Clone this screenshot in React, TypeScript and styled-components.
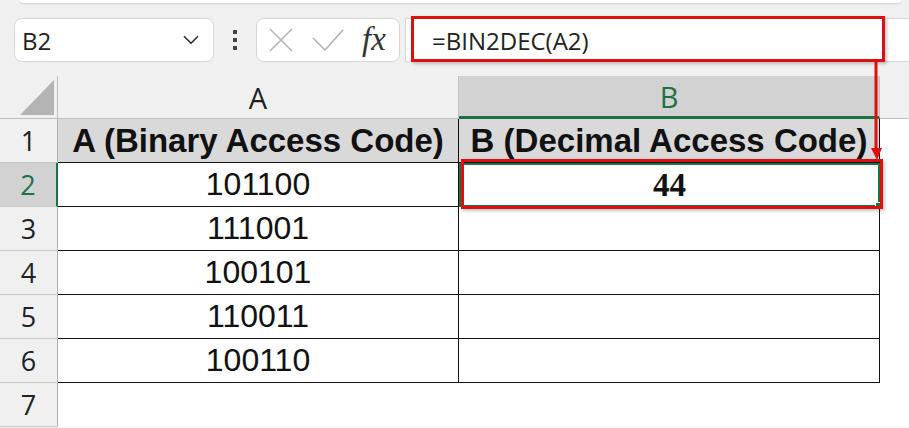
import styled, { createGlobalStyle } from 'styled-components';
import { ChevronDown } from 'lucide-react';

const GlobalStyle = createGlobalStyle`
  html, body { margin:0; padding:0; background:#f0f0f0; }
  * { box-sizing:border-box; }
`;

const GREEN = '#1e7145';
const RED = '#e00f0f';

const Page = styled.div`position:relative; width:909px; height:428px; overflow:hidden; background:#f0f0f0; font-family:"Open Sans","Noto Sans",sans-serif; color:#222;`;
const Ribbon = styled.div`height:3px; margin:0 8px 0 20px; background:#fff; border-radius:0 0 6px 6px; box-shadow:0 1px 2px rgba(0,0,0,.14);`;
const Toolbar = styled.div`display:flex; align-items:center; height:44px; margin-top:15px; padding-left:14px;`;
const NameBox = styled.div`
  width:200px; height:44px; display:flex; align-items:center; justify-content:space-between;
  padding:0 9px 0 7px; background:#fff; border:1px solid #d6d6d6; border-radius:8px; font-size:24px; color:#222;
`;
const Grip = styled.div`width:42px; display:flex; flex-direction:column; align-items:center; gap:4px; span{width:4px; height:4px; background:#444;}`;
const FxBox = styled.div`
  width:144px; height:44px; display:flex; align-items:center; gap:18px; padding:0 10px 0 11px;
  background:#fff; border:1px solid #d6d6d6; border-radius:8px;
`;
const Fx = styled.span`font-family:"Liberation Serif","Times New Roman",serif; font-style:italic; font-size:33px; color:#333; line-height:1; margin-top:-2px;`;
const FormulaBar = styled.div`
  position:relative; flex:1; height:44px; margin-left:5px; display:flex; align-items:center; padding-left:26px;
  background:#fff; border:1px solid #d9d9d9; border-right:none; font-size:24px; color:#222;
`;
const RedBox = styled.div`
  position:absolute; z-index:3; border:3px solid ${RED}; box-shadow:2px 2px 3px rgba(0,0,0,.22); pointer-events:none;
`;
const FormulaBox = styled(RedBox)`left:5px; top:-3px; width:474px; height:46px;`;
const CellBox = styled(RedBox)`left:0; top:-6px; right:-5px; bottom:-4px;`;
const Arrow = styled.svg`position:absolute; z-index:4; left:868px; top:60px;`;

const Sheet = styled.div`
  display:grid; margin-top:14px; grid-template-columns:58px 401px 421px 1fr;
  grid-template-rows:43px repeat(7, 44px); background:#fff;
`;
const Corner = styled.div`
  background:#f0f0f0; border-right:1px solid #bdbdbd; border-bottom:1px solid #bdbdbd; padding:4px 3px 3px 20px;
  div{width:100%; height:100%; background:#b4b4b4; clip-path:polygon(100% 0,100% 100%,0 100%);}
`;
const ColHeader = styled.div<{ $active?: boolean; $last?: boolean }>`
  display:flex; align-items:center; justify-content:center; font-size:29px;
  background:${({ $active }) => ($active ? '#d2d2d2' : '#f0f0f0')};
  color:${({ $active }) => ($active ? GREEN : '#222')};
  border-right:1px solid ${({ $last }) => ($last ? 'transparent' : '#c4c4c4')};
  border-bottom:${({ $active }) => ($active ? `3px solid ${GREEN}` : '1px solid #bdbdbd')};
`;
const RowHeader = styled.div<{ $active?: boolean }>`
  display:flex; align-items:center; justify-content:center; font-size:27px;
  background:${({ $active }) => ($active ? '#d2d2d2' : '#f0f0f0')};
  color:${({ $active }) => ($active ? GREEN : '#222')};
  border-bottom:1px solid #c8c8c8;
  border-right:${({ $active }) => ($active ? `2px solid ${GREEN}` : '1px solid #b0b0b0')};
`;
const Cell = styled.div<{ $head?: boolean; $table?: boolean }>`
  position:relative; display:flex; align-items:center; justify-content:center;
  font-family:"Liberation Sans",Arial,sans-serif; color:#111;
  font-weight:${({ $head }) => ($head ? 700 : 400)};
  font-size:${({ $head }) => ($head ? '33px' : '32px')};
  background:${({ $head }) => ($head ? '#d9d9d9' : '#fff')};
  border-right:1px solid ${({ $table }) => ($table ? '#111' : 'transparent')};
  border-bottom:1px solid ${({ $table }) => ($table ? '#111' : 'transparent')};
  white-space:nowrap;
`;
const Selected = styled.div`
  position:relative; display:flex; align-items:center; justify-content:center; background:#fff;
  border:2px solid ${GREEN};
  font-family:"Liberation Serif","Times New Roman",serif; font-weight:700; font-size:33px; color:#111;
`;
const Handle = styled.span`position:absolute; z-index:2; right:-4px; bottom:-4px; width:7px; height:7px; background:${GREEN}; border:1px solid #fff;`;

const binaries = ['111001', '100101', '110011', '100110'];

export default function App() {
  return (
    <Page>
      <GlobalStyle />
      <Ribbon />
      <Toolbar>
        <NameBox>
          <span>B2</span>
          <ChevronDown size={26} strokeWidth={1.6} color="#333" />
        </NameBox>
        <Grip><span /><span /><span /></Grip>
        <FxBox>
          <svg width="26" height="24" viewBox="0 0 26 24">
            <path d="M2 1 L24 23 M24 1 L2 23" stroke="#b4b4b4" strokeWidth="1.6" fill="none" />
          </svg>
          <svg width="32" height="22" viewBox="0 0 32 22">
            <path d="M1 9 L13 21 L31 1" stroke="#b4b4b4" strokeWidth="1.6" fill="none" />
          </svg>
          <Fx>fx</Fx>
        </FxBox>
        <FormulaBar>
          =BIN2DEC(A2)
          <FormulaBox />
        </FormulaBar>
      </Toolbar>

      <Sheet>
        <Corner><div /></Corner>
        <ColHeader>A</ColHeader>
        <ColHeader $active>B</ColHeader>
        <ColHeader $last />

        <RowHeader>1</RowHeader>
        <Cell $head $table>A (Binary Access Code)</Cell>
        <Cell $head $table>B (Decimal Access Code)</Cell>
        <Cell />

        <RowHeader $active>2</RowHeader>
        <Cell $table>101100</Cell>
        <Selected>
          44
          <Handle />
          <CellBox />
        </Selected>
        <Cell />

        {binaries.map((b, i) => [
          <RowHeader key={`r${i}`}>{i + 3}</RowHeader>,
          <Cell key={`a${i}`} $table>{b}</Cell>,
          <Cell key={`b${i}`} $table />,
          <Cell key={`c${i}`} />,
        ])}

        <RowHeader>7</RowHeader>
        <Cell />
        <Cell />
        <Cell />
      </Sheet>

      <Arrow width="18" height="102" viewBox="0 0 18 102">
        <path d="M8 2 L8 90" stroke={RED} strokeWidth="3" />
        <polygon points="3,88 14,88 9,100" fill={RED} />
      </Arrow>
    </Page>
  );
}
